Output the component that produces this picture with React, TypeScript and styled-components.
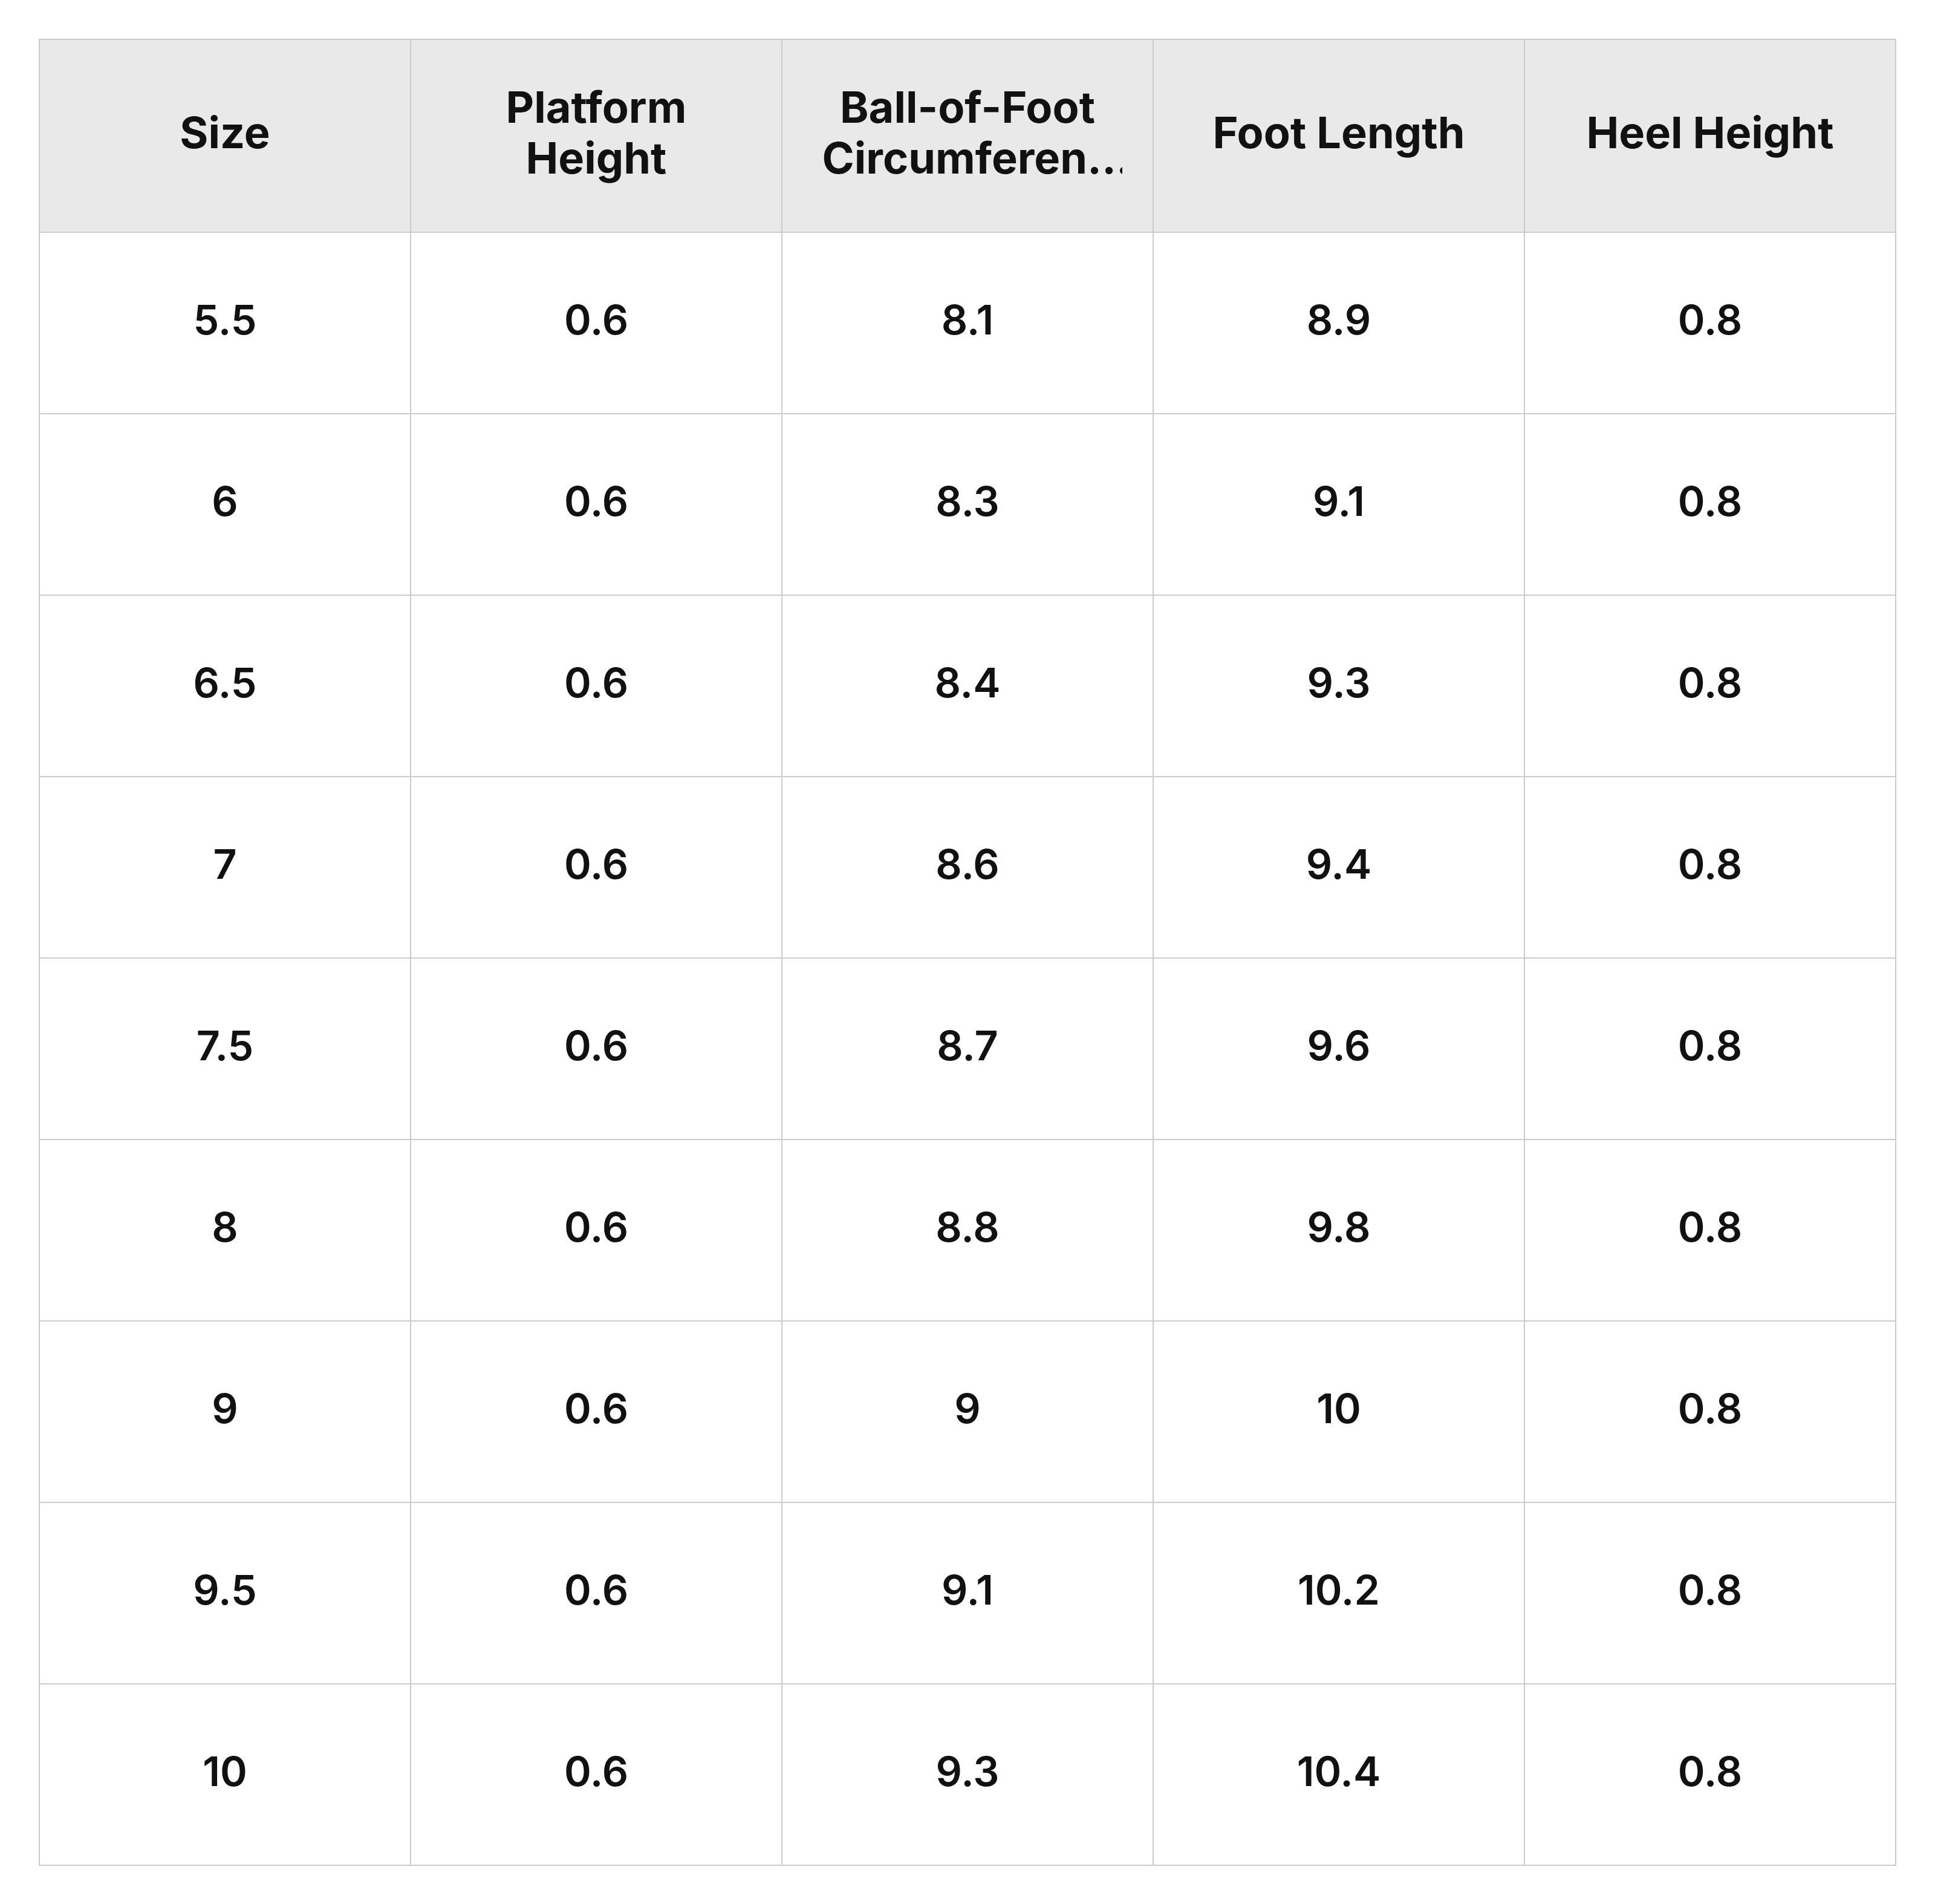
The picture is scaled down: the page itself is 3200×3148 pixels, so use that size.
import React from "react";
import styled, { createGlobalStyle } from "styled-components";

const Global = createGlobalStyle`
  html, body { margin: 0; padding: 0; background: #ffffff; }
  body { font-family: Inter, Roboto, "Liberation Sans", Arial, sans-serif; color: #111111; }
`;

const Page = styled.div`
  padding: 64px;
`;

const Table = styled.table`
  width: 3072px;
  table-layout: fixed;
  border-collapse: collapse;
  border: 2px solid #cccccc;
`;

const HeadRow = styled.tr`
  height: 319px;
  background: #e9e9e9;
`;

const BodyRow = styled.tr`
  height: 300px;
`;

const HeadCell = styled.th`
  border: 2px solid #cccccc;
  padding: 0 50px 12px;
  font-size: 72px;
  line-height: 84px;
  font-weight: 700;
  text-align: center;
  vertical-align: middle;
`;

const Clamp = styled.div`
  display: -webkit-box;
  -webkit-box-orient: vertical;
  -webkit-line-clamp: 2;
  overflow: hidden;
  overflow-wrap: anywhere;
  padding: 4px 0;
`;

const Cell = styled.td`
  border: 2px solid #cccccc;
  padding: 0 40px 12px;
  font-size: 68px;
  line-height: 90px;
  font-weight: 600;
  text-align: center;
  vertical-align: middle;
`;

const headers = ["Size", "Platform Height", "Ball-of-Foot Circumference", "Foot Length", "Heel Height"];

const rows: string[][] = [
  ["5.5", "0.6", "8.1", "8.9", "0.8"],
  ["6", "0.6", "8.3", "9.1", "0.8"],
  ["6.5", "0.6", "8.4", "9.3", "0.8"],
  ["7", "0.6", "8.6", "9.4", "0.8"],
  ["7.5", "0.6", "8.7", "9.6", "0.8"],
  ["8", "0.6", "8.8", "9.8", "0.8"],
  ["9", "0.6", "9", "10", "0.8"],
  ["9.5", "0.6", "9.1", "10.2", "0.8"],
  ["10", "0.6", "9.3", "10.4", "0.8"],
];

export default function App() {
  return (
    <Page>
      <Global />
      <Table>
        <thead>
          <HeadRow>
            {headers.map((h) => (
              <HeadCell key={h}>
                <Clamp>{h}</Clamp>
              </HeadCell>
            ))}
          </HeadRow>
        </thead>
        <tbody>
          {rows.map((r, i) => (
            <BodyRow key={i}>
              {r.map((c, j) => (
                <Cell key={j}>{c}</Cell>
              ))}
            </BodyRow>
          ))}
        </tbody>
      </Table>
    </Page>
  );
}
